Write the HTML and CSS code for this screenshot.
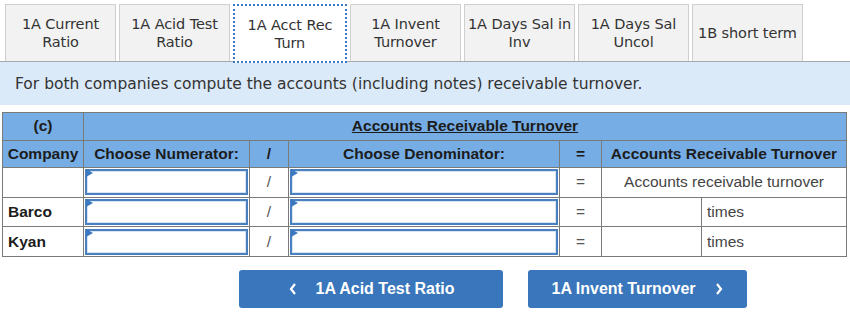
FILE: index.html
```html
<!DOCTYPE html>
<html lang="en">
<head>
<meta charset="UTF-8">
<title>Accounts Receivable Turnover</title>
<link rel="stylesheet" href="styles.css">
</head>
<body>

<div class="tabs">
  <div class="tab">1A Current<br>Ratio</div>
  <div class="tab">1A Acid Test<br>Ratio</div>
  <div class="tab active">1A Acct Rec<br>Turn</div>
  <div class="tab">1A Invent<br>Turnover</div>
  <div class="tab">1A Days Sal in<br>Inv</div>
  <div class="tab">1A Days Sal<br>Uncol</div>
  <div class="tab">1B short term</div>
</div>

<div class="banner">For both companies compute the accounts (including notes) receivable turnover.</div>

<table class="grid">
  <colgroup>
    <col class="c-company">
    <col class="c-num">
    <col class="c-op">
    <col class="c-den">
    <col class="c-eq">
    <col class="c-val">
    <col class="c-unit">
  </colgroup>
  <tr class="head">
    <th>(c)</th>
    <th colspan="6"><u>Accounts Receivable Turnover</u></th>
  </tr>
  <tr class="head">
    <th>Company</th>
    <th>Choose Numerator:</th>
    <th>/</th>
    <th>Choose Denominator:</th>
    <th>=</th>
    <th colspan="2">Accounts Receivable Turnover</th>
  </tr>
  <tr>
    <td class="name"></td>
    <td class="pick"><div class="select"></div></td>
    <td class="op">/</td>
    <td class="pick"><div class="select"></div></td>
    <td class="op">=</td>
    <td class="label" colspan="2">Accounts receivable turnover</td>
  </tr>
  <tr>
    <td class="name">Barco</td>
    <td class="pick"><div class="select"></div></td>
    <td class="op">/</td>
    <td class="pick"><div class="select"></div></td>
    <td class="op">=</td>
    <td></td>
    <td class="unit">times</td>
  </tr>
  <tr>
    <td class="name">Kyan</td>
    <td class="pick"><div class="select"></div></td>
    <td class="op">/</td>
    <td class="pick"><div class="select"></div></td>
    <td class="op">=</td>
    <td></td>
    <td class="unit">times</td>
  </tr>
</table>

<div class="nav">
  <button class="nav-btn prev">
    <svg width="10" height="14" viewBox="0 0 10 14"><path d="M7 2 L3 7 L7 12" fill="none" stroke="#fff" stroke-width="2.2"/></svg>
    <span>1A Acid Test Ratio</span>
  </button>
  <button class="nav-btn next">
    <span>1A Invent Turnover</span>
    <svg width="10" height="14" viewBox="0 0 10 14"><path d="M3 2 L7 7 L3 12" fill="none" stroke="#fff" stroke-width="2.2"/></svg>
  </button>
</div>

</body>
</html>
```

FILE: styles.css
```css
body {
  margin: 0;
  padding: 0;
  background-color: #fff;
  font-family: "DejaVu Sans", Verdana, sans-serif;
  color: #333;
}

/* tab strip */
.tabs {
  display: flex;
  gap: 3px;
  padding: 4px 0 0 5px;
}

.tab {
  box-sizing: border-box;
  width: 111px;
  height: 57px;
  display: flex;
  align-items: center;
  justify-content: center;
  text-align: center;
  padding: 0;
  font-size: 14.5px;
  line-height: 18px;
  white-space: nowrap;
  letter-spacing: -0.1px;
  background-color: #f2f2f2;
  border: 1px solid #cfcfcf;
  border-bottom: none;
  color: #333;
}

.tab.active {
  width: 114px;
  height: 59px;
  margin-bottom: -2px;
  background-color: #fff;
  border: 2px dotted #3b78bf;
  position: relative;
  z-index: 1;
}

.banner {
  height: 43px;
  display: flex;
  align-items: center;
  padding-left: 15px;
  background-color: #dbeaf8;
  border-top: 1px solid #a9a9a9;
  font-size: 15.5px;
  color: #333;
}

/* table */
.grid {
  margin: 7px 0 0 2px;
  width: 845px;
  border-collapse: collapse;
  table-layout: fixed;
  font-family: "Liberation Sans", Arial, sans-serif;
  font-size: 15.5px;
}

.c-company { width: 81px; }
.c-num { width: 166px; }
.c-op { width: 39px; }
.c-den { width: 271px; }
.c-eq { width: 42px; }
.c-val { width: 100px; }

.grid th,
.grid td {
  border: 1px solid #7a7a7a;
  height: 26.6px;
  padding: 0;
}

.grid tr.head th {
  background-color: #76ade4;
  color: #1c1c1c;
  font-weight: bold;
  text-align: center;
}

.grid td.name {
  font-weight: bold;
  color: #1c1c1c;
  padding-left: 5px;
}

.grid td.op {
  text-align: center;
  color: #555;
}

.grid td.label {
  text-align: center;
  color: #444;
}

.grid td.unit {
  padding-left: 5px;
  color: #444;
}

.grid td.pick {
  padding: 1px;
}

.select {
  box-sizing: border-box;
  height: 26px;
  background-color: #fff;
  border: 2px solid #4a7fc0;
  box-shadow: inset 0 0 0 1px #d6e4f4;
  position: relative;
}

/* little flag in the corner */
.select::before {
  content: "";
  position: absolute;
  top: -1px;
  left: -1px;
  border-top: 4px solid transparent;
  border-bottom: 4px solid transparent;
  border-left: 7px solid #3b78bf;
  transform: translateY(-1px);
}

/* nav buttons */
.nav {
  display: flex;
  gap: 25px;
  padding: 13px 0 0 239px;
}

.nav-btn {
  height: 38px;
  display: flex;
  align-items: center;
  justify-content: center;
  gap: 18px;
  background-color: #3a76bb;
  color: #fff;
  border: none;
  border-radius: 3px;
  font-family: "Liberation Sans", Arial, sans-serif;
  font-size: 16px;
  font-weight: bold;
  cursor: pointer;
}

.nav-btn.prev {
  width: 264px;
}

.nav-btn.next {
  width: 219px;
}
```
